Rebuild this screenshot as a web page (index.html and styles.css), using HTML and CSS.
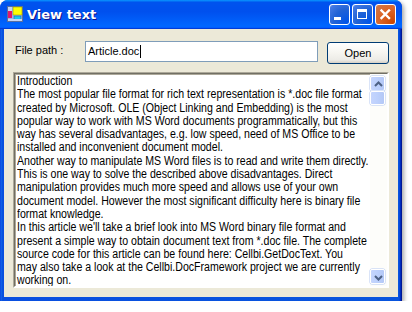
FILE: index.html
```html
<!DOCTYPE html>
<html>
<head>
<meta charset="utf-8">
<link rel="stylesheet" href="styles.css">
</head>
<body>
<div class="window">
  <div class="titlebar">
    <svg class="appicon" width="16" height="16" viewBox="0 0 16 16">
      <rect x="0.5" y="0.5" width="15" height="15" fill="#9ab4e8" stroke="#5a6f9e"/>
      <rect x="1" y="1" width="4" height="4" fill="#c6d6f4"/>
      <rect x="1" y="5" width="4" height="7" fill="#e0186c"/>
      <rect x="6" y="1" width="9" height="8" fill="#ffff00" stroke="#8a8a00" stroke-width="0.5"/>
      <rect x="7" y="10" width="7" height="4" fill="#18c8f0" stroke="#1060a0" stroke-width="0.5"/>
      <rect x="1" y="13" width="14" height="2" fill="#c6d6f4"/>
    </svg>
    <span class="title">View text</span>
    <div class="tbuttons">
      <div class="tbtn min"><svg width="21" height="21" viewBox="0 0 21 21"><rect x="5" y="13" width="7" height="3" fill="#fff"/></svg></div>
      <div class="tbtn max"><svg width="21" height="21" viewBox="0 0 21 21"><rect x="5.5" y="5.5" width="9" height="9" fill="none" stroke="#fff" stroke-width="1"/><rect x="5" y="5" width="10" height="3" fill="#fff"/></svg></div>
      <div class="tbtn close"><svg width="21" height="21" viewBox="0 0 21 21"><path d="M6.5 6.5 L14 14 M14 6.5 L6.5 14" stroke="#fff" stroke-width="2.4" stroke-linecap="square"/></svg></div>
    </div>
  </div>
  <div class="client">
    <div class="pathrow">
      <span class="label">File path :</span>
      <div class="input">Article.doc<span class="caret"></span></div>
      <button class="btn">Open</button>
    </div>
    <div class="memo">
      <div class="content">
        <div>Introduction</div>
        <div>The most popular file format for rich text representation is *.doc file format</div>
        <div>created by Microsoft. OLE (Object Linking and Embedding) is the most</div>
        <div>popular way to work with MS Word documents programmatically, but this</div>
        <div>way has several disadvantages, e.g. low speed, need of MS Office to be</div>
        <div>installed and inconvenient document model.</div>
        <div>Another way to manipulate MS Word files is to read and write them directly.</div>
        <div>This is one way to solve the described above disadvantages. Direct</div>
        <div>manipulation provides much more speed and allows use of your own</div>
        <div>document model. However the most significant difficulty here is binary file</div>
        <div>format knowledge.</div>
        <div>In this article we'll take a brief look into MS Word binary file format and</div>
        <div>present a simple way to obtain document text from *.doc file. The complete</div>
        <div>source code for this article can be found here: Cellbi.GetDocText. You</div>
        <div>may also take a look at the Cellbi.DocFramework project we are currently</div>
        <div>working on.</div>
      </div>
      <div class="scrollbar">
        <div class="sbtn"><svg width="15" height="15" viewBox="0 0 15 15"><path d="M4 9 L7.5 5.5 L11 9" fill="none" stroke="#4d6185" stroke-width="2"/></svg></div>
        <div class="thumb"></div>
        <div class="track"></div>
        <div class="sbtn"><svg width="15" height="15" viewBox="0 0 15 15"><path d="M4 6 L7.5 9.5 L11 6" fill="none" stroke="#4d6185" stroke-width="2"/></svg></div>
      </div>
    </div>
  </div>
</div>
</body>
</html>
```
FILE: styles.css
```css
html, body {
  margin: 0;
  padding: 0;
  background: #ffffff;
}
.window {
  width: 402px;
  height: 301px;
  box-sizing: border-box;
  border-radius: 8px 7px 0 0;
  box-shadow: 2px 2px 4px rgba(0,0,0,0.35);
  display: flex;
  flex-direction: column;
  padding: 0 4px 4px 4px;
  background: linear-gradient(to right, #0733d8 0, #166aee 1px, #0855dd 2px, #0a4fe0 3px, #0855dd calc(100% - 3px), #003bda calc(100% - 2px), #001ea0 calc(100% - 1px), #00138c 100%);
}
.titlebar {
  height: 30px;
  margin: 0 -4px;
  padding: 0 6px 0 7px;
  display: flex;
  align-items: center;
  border-radius: 8px 7px 0 0;
  background: linear-gradient(to bottom, #0997ff 0, #0053ee 8%, #0050ee 40%, #0066ff 88%, #0066ff 93%, #005bff 95%, #003dd7 96%, #003dd7 100%);
  box-sizing: border-box;
}
.appicon {
  flex: none;
  margin-top: -1px;
}
.title {
  margin-left: 4px;
  color: #fff;
  font-family: "DejaVu Sans", sans-serif;
  font-weight: bold;
  font-size: 13px;
  text-shadow: 1px 1px #0f1089;
  flex: 1;
}
.tbuttons {
  display: flex;
  gap: 2px;
  margin-top: -1px;
}
.tbtn {
  width: 21px;
  height: 21px;
  box-sizing: border-box;
  border: 1px solid #fff;
  border-radius: 3px;
  position: relative;
  overflow: hidden;
}
.tbtn svg { position: absolute; left: -1px; top: -1px; }
.tbtn.min, .tbtn.max {
  background: radial-gradient(circle at 90% 90%, #0054e9 0%, #2263d5 55%, #4479e4 90%, #a3bbec 100%);
}
.tbtn.close {
  background: radial-gradient(circle at 90% 90%, #cc4600 0%, #dc6527 55%, #cd7546 90%, #e5a788 100%);
}
.client {
  flex: 1;
  background: #ece9d8;
  display: flex;
  flex-direction: column;
  padding: 12px 9px 9px 9px;
}
.pathrow {
  display: flex;
  align-items: flex-start;
  height: 22px;
}
.label {
  font-family: "Liberation Sans", Arial, sans-serif;
  font-size: 11px;
  color: #000;
  margin: 3px 0 0 2px;
  width: 70px;
}
.input {
  width: 233px;
  height: 21px;
  box-sizing: border-box;
  border: 1px solid #7f9db9;
  background: #fff;
  font-family: "Liberation Sans", Arial, sans-serif;
  font-size: 11px;
  line-height: 19px;
  padding-left: 2px;
  color: #000;
  display: flex;
  align-items: center;
}
.caret {
  display: inline-block;
  width: 1px;
  height: 13px;
  background: #000;
  margin-left: 1px;
}
.btn {
  margin-left: 9px;
  width: 62px;
  height: 22px;
  margin-top: 1px;
  box-sizing: border-box;
  border: 1px solid #003c74;
  border-radius: 3px;
  background: linear-gradient(to bottom, #ffffff 0%, #f6f5f0 50%, #ecebe6 85%, #d6d0c5 100%);
  font-family: "Liberation Sans", Arial, sans-serif;
  font-size: 11px;
  color: #000;
  padding: 0;
}
.memo {
  margin-top: 9px;
  width: 376px;
  height: 216px;
  box-sizing: border-box;
  border-style: solid;
  border-width: 2px;
  border-color: #716f64 #fff #fff #716f64;
  box-shadow: inset 1px 1px #aca899;
  background: #fff;
  display: flex;
  position: relative;
}
.memo::before {
  content: "";
  position: absolute;
  left: -2px; top: -2px; right: -2px; bottom: -2px;
  border-style: solid;
  border-width: 1px;
  border-color: #aca899 #fff #fff #aca899;
  pointer-events: none;
}
.content {
  flex: 1;
  overflow: hidden;
  padding: 1px 0 0 2px;
  font-family: "Liberation Sans", Arial, sans-serif;
  font-size: 12px;
  line-height: 13.3px;
  color: #000;
  white-space: nowrap;
}
.content div {
  transform: scaleX(0.882);
  transform-origin: 0 50%;
}
.scrollbar {
  width: 17px;
  display: flex;
  flex-direction: column;
  background: #fdfdfa;
  padding: 2px 1px 2px 0;
  box-sizing: border-box;
}
.sbtn, .thumb {
  width: 15px;
  height: 15px;
  box-sizing: border-box;
  border: 1px solid #fff;
  border-radius: 2px;
  background: linear-gradient(to right, #c5d5fd, #bcd0fc 50%, #b4c8f6);
  box-shadow: 0 0 0 0.5px #b6c9f2;
}
.thumb {
  height: 14px;
}
.track {
  flex: 1;
}
```
